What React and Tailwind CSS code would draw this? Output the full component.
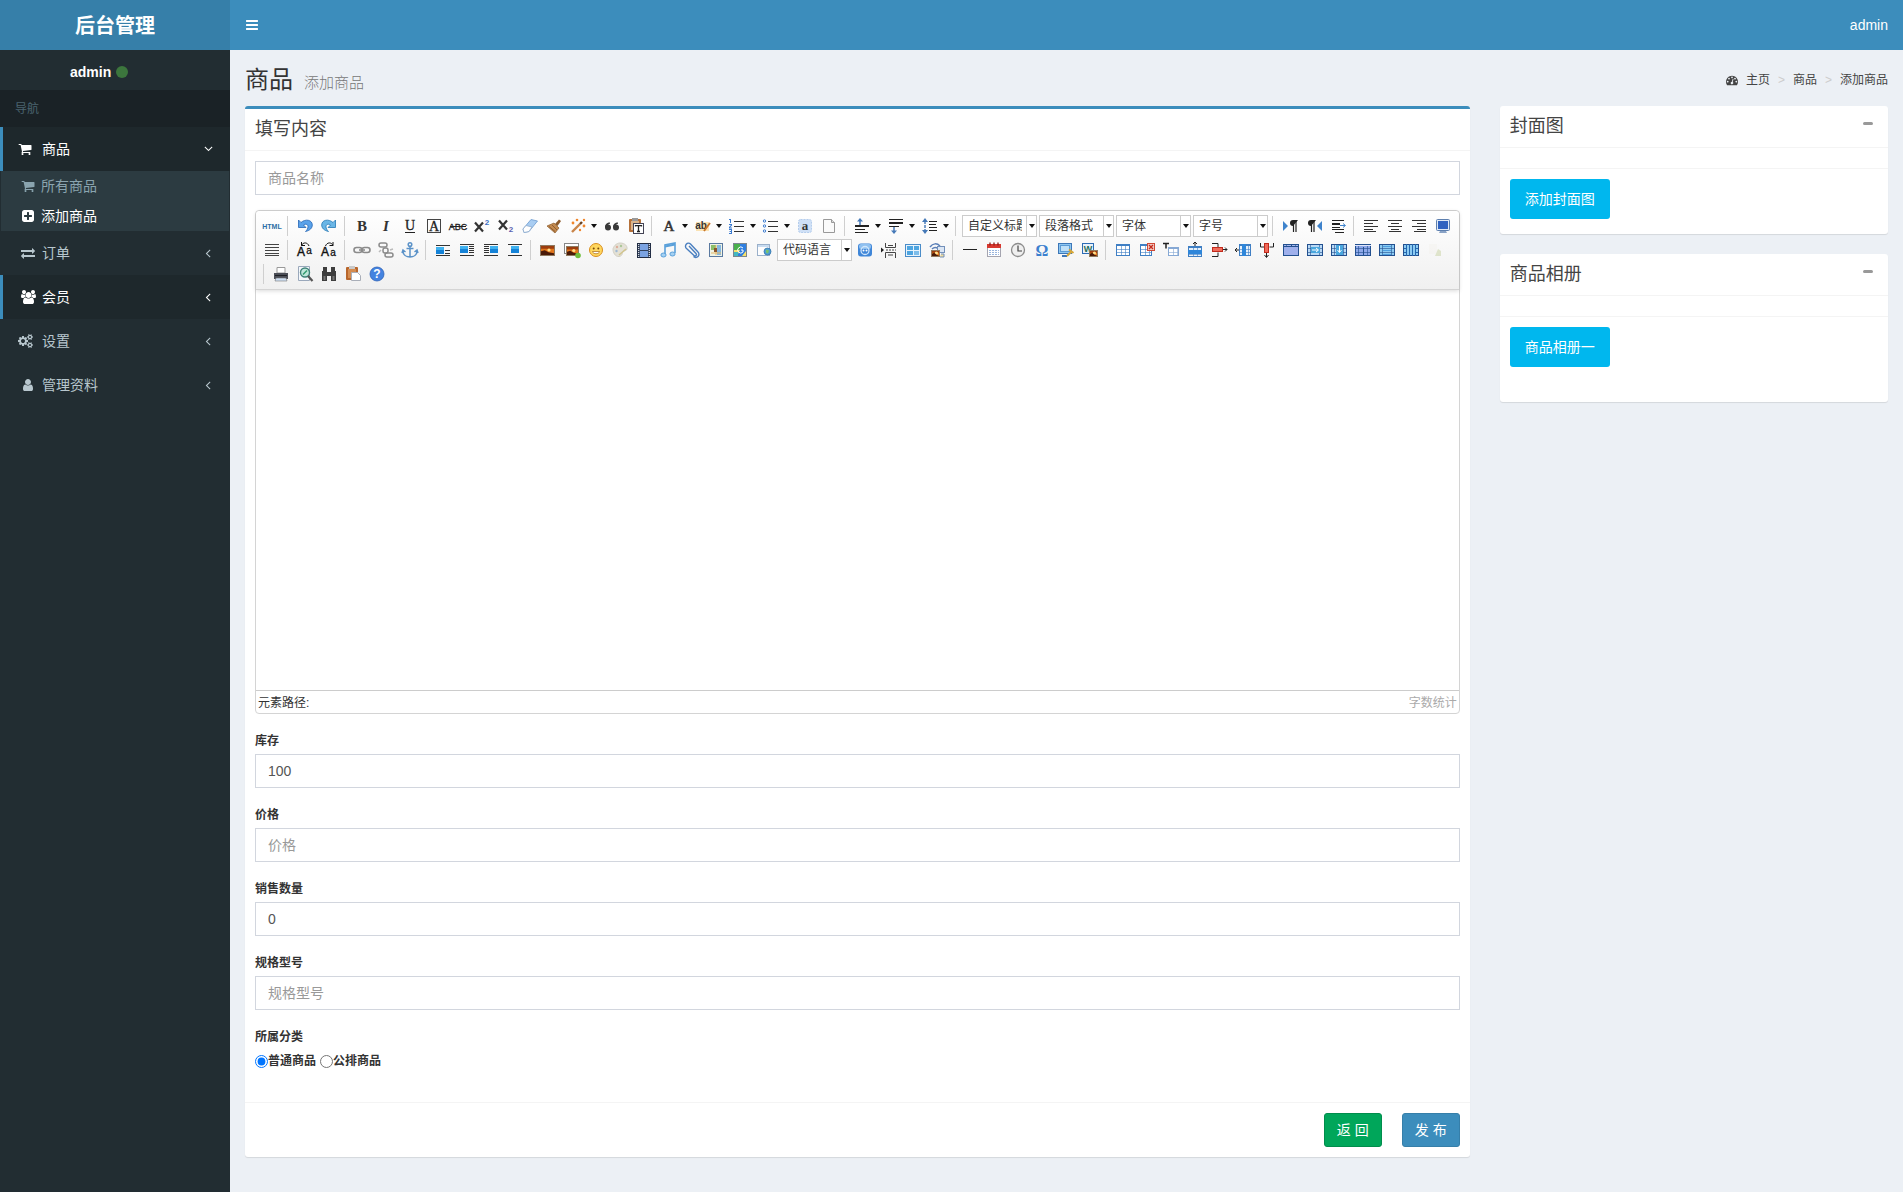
import React, { useState } from "react";

/* ---------- Site icons ---------- */

const GLYPHS = {
  bars: {
    w: 1792,
    d: "M1664 1344v128q0 26-19 45t-45 19h-1408q-26 0-45-19t-19-45v-128q0-26 19-45t45-19h1408q26 0 45 19t19 45zm0-512v128q0 26-19 45t-45 19h-1408q-26 0-45-19t-19-45v-128q0-26 19-45t45-19h1408q26 0 45 19t19 45zm0-512v128q0 26-19 45t-45 19h-1408q-26 0-45-19t-19-45v-128q0-26 19-45t45-19h1408q26 0 45 19t19 45z",
  },
  cart: {
    w: 1792,
    d: "M704 1536q0 52-38 90t-90 38-90-38-38-90 38-90 90-38 90 38 38 90zm896 0q0 52-38 90t-90 38-90-38-38-90 38-90 90-38 90 38 38 90zm128-1088v512q0 24-16.5 42.5t-40.5 21.5l-1044 122q13 60 13 70 0 16-24 64h920q26 0 45 19t19 45-19 45-45 19h-1024q-26 0-45-19t-19-45q0-11 8-31.5t16-36 21.5-40 15.5-29.5l-177-823h-204q-26 0-45-19t-19-45 19-45 45-19h256q16 0 28.5 6.5t19.5 15.5 13 24.5 8 26 5.5 29.5 4.5 26h1201q26 0 45 19t19 45z",
  },
  angle: {
    w: 1792,
    d: "M1203 544q0 13-10 23l-393 393 393 393q10 10 10 23t-10 23l-50 50q-10 10-23 10t-23-10l-466-466q-10-10-10-23t10-23l466-466q10-10 23-10t23 10l50 50q10 10 10 23z",
  },
  plusSquare: {
    w: 1792,
    d: "M1408 960v-128q0-26-19-45t-45-19h-320v-320q0-26-19-45t-45-19h-128q-26 0-45 19t-19 45v320h-320q-26 0-45 19t-19 45v128q0 26 19 45t45 19h320v320q0 26 19 45t45 19h128q26 0 45-19t19-45v-320h320q26 0 45-19t19-45zm256-544v960q0 119-84.5 203.5t-203.5 84.5h-960q-119 0-203.5-84.5t-84.5-203.5v-960q0-119 84.5-203.5t203.5-84.5h960q119 0 203.5 84.5t84.5 203.5z",
  },
  exchange: {
    w: 1792,
    d: "M1792 1184v192q0 13-9.5 22.5t-22.5 9.5h-1376v192q0 13-9.5 22.5t-22.5 9.5q-12 0-24-10l-319-320q-9-9-9-22 0-14 9-23l320-320q9-9 23-9 13 0 22.5 9.5t9.5 22.5v192h1376q13 0 22.5 9.5t9.5 22.5zm0-544q0 14-9 23l-320 320q-9 9-23 9-13 0-22.5-9.5t-9.5-22.5v-192h-1376q-13 0-22.5-9.5t-9.5-22.5v-192q0-13 9.5-22.5t22.5-9.5h1376v-192q0-14 9-23t23-9q12 0 24 10l319 319q9 9 9 23z",
  },
  users: {
    w: 1920,
    d: "M593 896q-162 5-265 128h-134q-82 0-138-40.5t-56-118.5q0-353 124-353 6 0 43.5 21t97.5 42.5 119 21.5q67 0 133-23-5 37-5 66 0 139 81 256zm1071 637q0 120-73 189.5t-194 69.5h-874q-121 0-194-69.5t-73-189.5q0-53 3.5-103.5t14-109 26.5-108.5 43-97.5 62-81 85.5-53.5 111.5-20q10 0 43 21.5t73 48 107 48 135 21.5 135-21.5 107-48 73-48 43-21.5q61 0 111.5 20t85.5 53.5 62 81 43 97.5 26.5 108.5 14 109 3.5 103.5zm-1024-1277q0 106-75 181t-181 75-181-75-75-181 75-181 181-75 181 75 75 181zm704 384q0 159-112.5 271.5t-271.5 112.5-271.5-112.5-112.5-271.5 112.5-271.5 271.5-112.5 271.5 112.5 112.5 271.5zm576 225q0 78-56 118.5t-138 40.5h-134q-103-123-265-128 81-117 81-256 0-29-5-66 66 23 133 23 59 0 119-21.5t97.5-42.5 43.5-21q124 0 124 353zm-128-609q0 106-75 181t-181 75-181-75-75-181 75-181 181-75 181 75 75 181z",
  },
  user: {
    w: 1792,
    d: "M1536 1399q0 109-62.5 187t-150.5 78h-854q-88 0-150.5-78t-62.5-187q0-85 8.5-160.5t31.5-152 58.5-131 94-89 134.5-34.5q131 128 313 128t313-128q76 0 134.5 34.5t94 89 58.5 131 31.5 152 8.5 160.5zm-256-887q0 159-112.5 271.5t-271.5 112.5-271.5-112.5-112.5-271.5 112.5-271.5 271.5-112.5 271.5 112.5 112.5 271.5z",
  },
  cogs: {
    w: 1920,
    d: "M896 896q0-106-75-181t-181-75-181 75-75 181 75 181 181 75 181-75 75-181zm768 512q0-52-38-90t-90-38-90 38-38 90q0 53 37.5 90.5t90.5 37.5 90.5-37.5 37.5-90.5zm0-1024q0-52-38-90t-90-38-90 38-38 90q0 53 37.5 90.5t90.5 37.5 90.5-37.5 37.5-90.5zm-384 421v185q0 10-7 19.5t-16 10.5l-155 24q-11 35-32 76 34 48 90 115 7 11 7 20 0 12-7 19-23 30-82.5 89.5t-78.5 59.5q-11 0-21-7l-115-90q-37 19-77 31-11 108-23 155-7 24-30 24h-186q-11 0-20-7.5t-10-17.5l-23-153q-34-10-75-31l-118 89q-7 7-20 7-11 0-21-8-144-133-144-160 0-9 7-19 10-14 41-53t47-61q-23-44-35-82l-152-24q-10-1-17-9.5t-7-19.5v-185q0-10 7-19.5t16-10.5l155-24q11-35 32-76-34-48-90-115-7-11-7-20 0-12 7-20 22-30 82-89t79-59q11 0 21 7l115 90q34-18 77-32 11-108 23-154 7-24 30-24h186q11 0 20 7.5t10 17.5l23 153q34 10 75 31l118-89q8-7 20-7 11 0 21 8 144 133 144 160 0 8-7 19-12 16-42 54t-45 60q23 48 34 82l152 23q10 2 17 10.5t7 19.5zm640 533v140q0 16-149 31-12 27-30 52 51 113 51 138 0 4-4 7-122 71-124 71-8 0-46-47t-52-68q-20 2-30 2t-30-2q-14 21-52 68t-46 47q-2 0-124-71-4-3-4-7 0-25 51-138-18-25-30-52-149-15-149-31v-140q0-16 149-31 13-29 30-52-51-113-51-138 0-4 4-7 4-2 35-20t59-34 30-16q8 0 46 46.5t52 67.5q20-2 30-2t30 2q51-71 92-112l6-2q4 0 124 70 4 3 4 7 0 25-51 138 17 23 30 52 149 15 149 31zm0-1024v140q0 16-149 31-12 27-30 52 51 113 51 138 0 4-4 7-122 71-124 71-8 0-46-47t-52-68q-20 2-30 2t-30-2q-14 21-52 68t-46 47q-2 0-124-71-4-3-4-7 0-25 51-138-18-25-30-52-149-15-149-31v-140q0-16 149-31 13-29 30-52-51-113-51-138 0-4 4-7 4-2 35-20t59-34 30-16q8 0 46 46.5t52 67.5q20-2 30-2t30 2q51-71 92-112l6-2q4 0 124 70 4 3 4 7 0 25-51 138 17 23 30 52 149 15 149 31z",
  },
  dashboard: {
    w: 1792,
    d: "M384 1152q0-53-37.5-90.5t-90.5-37.5-90.5 37.5-37.5 90.5 37.5 90.5 90.5 37.5 90.5-37.5 37.5-90.5zm192-448q0-53-37.5-90.5t-90.5-37.5-90.5 37.5-37.5 90.5 37.5 90.5 90.5 37.5 90.5-37.5 37.5-90.5zm428 481l101-382q6-26-7.5-48.5t-38.5-29.5-48 6.5-30 39.5l-101 382q-60 5-107 43.5t-63 98.5q-20 77 20 146t117 89 146-20 89-117q16-60-6-117t-72-91zm660-33q0-53-37.5-90.5t-90.5-37.5-90.5 37.5-37.5 90.5 37.5 90.5 90.5 37.5 90.5-37.5 37.5-90.5zm-640-640q0-53-37.5-90.5t-90.5-37.5-90.5 37.5-37.5 90.5 37.5 90.5 90.5 37.5 90.5-37.5 37.5-90.5zm448 192q0-53-37.5-90.5t-90.5-37.5-90.5 37.5-37.5 90.5 37.5 90.5 90.5 37.5 90.5-37.5 37.5-90.5zm320 448q0 261-141 483-19 29-54 29h-1402q-35 0-54-29-141-221-141-483 0-182 71-348t191-286 286-191 348-71 348 71 286 191 191 286 71 348z",
  },
};

function Glyph({ name, className = "h-[14px] w-[14px]" }) {
  const g = GLYPHS[name];
  return (
    <svg viewBox={`0 0 ${g.w} 1792`} className={className} fill="currentColor" aria-hidden="true">
      <path d={g.d} />
    </svg>
  );
}

/* ---------- Editor toolbar icons, drawn on an 18 x 18 board ---------- */

const SERIF = '"Liberation Serif", serif';
const SANS = '"Liberation Sans", sans-serif';

const Lines = ({ rows, color = "#333" }) =>
  rows.map(([x, y, w], i) => <rect key={i} x={x} y={y} width={w} height="1" fill={color} />);

const Grid = ({ x = 2, y = 3, w = 14, h = 12, fill = "#fff", line = "#3f7fc4", head = "#3f7fc4" }) => (
  <g>
    <rect x={x + 0.5} y={y + 0.5} width={w - 1} height={h - 1} fill={fill} stroke={line} />
    <rect x={x} y={y} width={w} height="2" fill={head} />
    <path
      d={`M${x + 5.5} ${y}v${h}M${x + 9.5} ${y}v${h}M${x} ${y + 5.5}h${w}M${x} ${y + 8.5}h${w}`}
      stroke={line}
      strokeOpacity="0.6"
      fill="none"
    />
  </g>
);

const Cells = ({ children, fill = "#b9d9f5" }) => (
  <g>
    <rect x="1.5" y="3.5" width="15" height="11" fill={fill} stroke="#23508f" />
    <path d="M4.5 3v12M13.5 3v12M1 7.5h16M1 11.5h16" stroke="#23508f" strokeOpacity="0.6" fill="none" />
    {children}
  </g>
);

const Photo = ({ x, y, w, h }) => (
  <g>
    <rect x={x + 0.5} y={y + 0.5} width={w - 1} height={h - 1} fill="#e2761b" stroke="#8f7a60" />
    <rect x={x + 1} y={y + 1} width={w - 2} height={h / 4} fill="#9c3d0e" />
    <circle cx={x + w * 0.6} cy={y + h / 2 - 0.5} r="1.6" fill="#ffe08a" />
    <path
      d={`M${x + 1} ${y + h - 1}v-${h / 3}l${w / 4}-1 ${w / 4} 2 ${w / 2 - 2} 1v${h / 3 - 2}z`}
      fill="#4a1a08"
    />
  </g>
);

const Chain = () => (
  <g fill="none" stroke="#8b8b8b" strokeWidth="1.6">
    <rect x="1" y="6.5" width="8" height="5" rx="2.5" />
    <rect x="9" y="6.5" width="8" height="5" rx="2.5" />
    <path d="M6 9h6" />
  </g>
);

const Float = ({ bx, by, rows }) => (
  <g>
    <Lines rows={rows} />
    <rect x={bx} y={by} width="8" height="7" fill="#1583d8" />
    <rect x={bx} y={by} width="8" height="3" fill="#3fb1ef" />
  </g>
);

const Numbered = ({ marks }) => (
  <g>
    <Lines rows={[[6, 4, 10], [6, 9, 10], [6, 14, 10]]} />
    {marks}
  </g>
);

const ICONS = {
  html: (
    <text x="9" y="12" textAnchor="middle" fontSize="7" fontWeight="700" fill="#2c6ea5" fontFamily={SANS}>
      HTML
    </text>
  ),
  undo: (
    <path d="M2.500 3v7.500H10L7.500 8c2-1.500 4.500-.8 4.500 1.700 0 1.800-1 3.300-2.500 4.800 4.500-1 6.800-3.500 6.800-6.500C16.300 2.800 9.500 1.500 5 5.500z" fill="#5aa2ea" stroke="#2466b5" strokeWidth="0.8" />
  ),
  redo: (
    <path d="M15.500 3v7.500H8L10.500 8C8.500 6.500 6 7.200 6 9.700c0 1.800 1 3.300 2.500 4.800C4 13.500 1.700 11 1.700 8 1.700 2.800 8.500 1.500 13 5.500z" fill="#6ab6e6" stroke="#2579b5" strokeWidth="0.8" />
  ),
  bold: <text x="9" y="14" textAnchor="middle" fontSize="15" fontWeight="700" fill="#333" fontFamily={SERIF}>B</text>,
  italic: <text x="9" y="14" textAnchor="middle" fontSize="15" fontWeight="700" fontStyle="italic" fill="#333" fontFamily={SERIF}>I</text>,
  underline: (
    <g>
      <text x="9" y="13" textAnchor="middle" fontSize="14" fill="#222" stroke="#222" strokeWidth="0.3" fontFamily={SERIF}>U</text>
      <rect x="4" y="15" width="10" height="1" fill="#222" />
    </g>
  ),
  border: (
    <g>
      <rect x="2.500" y="2.500" width="13" height="13" fill="none" stroke="#444" />
      <text x="9" y="14" textAnchor="middle" fontSize="14" fill="#222" stroke="#222" strokeWidth="0.3" fontFamily={SERIF}>A</text>
    </g>
  ),
  strike: (
    <g>
      <text x="9" y="13" textAnchor="middle" fontSize="9" fill="#222" stroke="#222" strokeWidth="0.3" fontFamily={SANS}>ABC</text>
      <rect x="1" y="9" width="16" height="1" fill="#222" />
    </g>
  ),
  sup: (
    <g>
      <path d="M2 5.500l8 9M10 5.500l-8 9" stroke="#333" strokeWidth="2.200" />
      <text x="14" y="8" textAnchor="middle" fontSize="8" fontWeight="700" fill="#3b6fc4" fontFamily={SANS}>2</text>
    </g>
  ),
  sub: (
    <g>
      <path d="M2 3.500l8 9M10 3.500l-8 9" stroke="#333" strokeWidth="2.200" />
      <text x="14" y="15" textAnchor="middle" fontSize="8" fontWeight="700" fill="#5a5fb0" fontFamily={SANS}>2</text>
    </g>
  ),
  eraser: (
    <g>
      <path d="M2 12l8-9.500 6.500 1.500-8.500 10.500-5 1z" fill="#a9cdf2" stroke="#6c9bcf" strokeWidth="0.8" />
      <path d="M2 12l3-3.500 6 1.500-3 4.500-5 1z" fill="#fff" stroke="#8eabcc" strokeWidth="0.8" />
    </g>
  ),
  brush: (
    <g>
      <path d="M10 7l4-4.500 2 1.500-3.500 5z" fill="#8c5a2b" />
      <path d="M2 9l7-3 5 5-4 5z" fill="#c48a4e" stroke="#8a5a2a" strokeWidth="0.7" />
      <path d="M4 9.500l6 5M7 8l5 5" stroke="#80512a" strokeWidth="0.8" />
    </g>
  ),
  wand: (
    <g>
      <path d="M3 15l8-8" stroke="#c9854a" strokeWidth="2.400" />
      <path d="M11 7l2-2" stroke="#6a3f1c" strokeWidth="2.400" />
      <g fill="#f0862c">
        <circle cx="4" cy="6" r="1.400" /><circle cx="8" cy="3" r="1.300" /><circle cx="15" cy="9" r="1.400" /><circle cx="15" cy="3" r="1.200" /><circle cx="11" cy="13" r="1.200" />
      </g>
    </g>
  ),
  quote: (
    <g fill="#3a3a3a">
      <circle cx="5" cy="10.500" r="3" /><path d="M2 10.500C2 7 4 5.500 7 5.500v1.200C5.500 7 4.500 8 4.500 9.500z" />
      <circle cx="13" cy="10.500" r="3" /><path d="M10 10.500c0-3.500 2-5 5-5v1.200c-1.500.3-2.500 1.300-2.500 2.800z" />
    </g>
  ),
  pasteText: (
    <g>
      <rect x="2" y="2" width="12" height="13" rx="1" fill="#b5713a" />
      <rect x="4" y="4" width="8" height="9" fill="#d9b48c" />
      <rect x="5" y="1" width="6" height="3" fill="#999" />
      <rect x="6.500" y="6.500" width="10" height="10" fill="#fff" stroke="#445" />
      <path d="M8.500 9.500V8.700h6v.8M11.500 8.500v6M10 14.500h3" stroke="#222" strokeWidth="1.300" fill="none" />
    </g>
  ),
  fore: <text x="9" y="14" textAnchor="middle" fontSize="15" fill="#333" stroke="#333" strokeWidth="0.5" fontFamily={SERIF}>A</text>,
  back: (
    <g>
      <rect x="2" y="5" width="13" height="9" fill="#fbe3b4" />
      <text x="7" y="12" textAnchor="middle" fontSize="10" fontWeight="700" fill="#333" fontFamily={SANS}>ab</text>
      <path d="M10 14l6-8" stroke="#c9762b" strokeWidth="1.800" />
    </g>
  ),
  ol: (
    <Numbered
      marks={<g fill="#3b7bd0"><path d="M1 2h2v4H2V3H1zM1 7h3v1.500L2 10.500h2v1H1v-1.500l2-2H1zM1 12h3v5H1v-1h2v-1H1.500v-1H3v-1H1z" /></g>}
    />
  ),
  ul: (
    <Numbered
      marks={<g fill="none" stroke="#3b7bd0"><circle cx="2.500" cy="4" r="1.200" /><circle cx="2.500" cy="9" r="1.200" /><circle cx="2.500" cy="14" r="1.200" /></g>}
    />
  ),
  selectAll: (
    <g>
      <rect x="2.500" y="2.500" width="13" height="13" rx="2" fill="#cfe0f6" stroke="#b4cdec" strokeDasharray="2 1" />
      <text x="9" y="13" textAnchor="middle" fontSize="13" fontWeight="700" fill="#333" fontFamily={SERIF}>a</text>
    </g>
  ),
  page: (
    <g>
      <path d="M3.500 2.500h8l3 3v10h-11z" fill="#fafafa" stroke="#999" />
      <path d="M11.500 2.500v3h3" fill="#ddd" stroke="#999" />
    </g>
  ),
  spaceTop: (
    <g>
      <path d="M7 8V3" stroke="#4579b8" strokeWidth="1.500" /><path d="M4 4.500L7 1l3 3.500z" fill="#4579b8" />
      <g fill="#222"><rect x="2" y="8" width="14" height="2" /><rect x="2" y="12" width="10" height="1" /><rect x="2" y="15" width="13" height="1" /></g>
    </g>
  ),
  spaceBottom: (
    <g>
      <path d="M7 10v5" stroke="#4579b8" strokeWidth="1.500" /><path d="M4 13.500L7 17l3-3.500z" fill="#4579b8" />
      <g fill="#222"><rect x="2" y="2" width="14" height="1" /><rect x="2" y="5" width="14" height="2" /><rect x="2" y="9" width="10" height="1" /></g>
    </g>
  ),
  lineHeight: (
    <g>
      <path d="M4 4v10" stroke="#4579b8" strokeWidth="1.400" strokeDasharray="3 1" /><path d="M1 5l3-4 3 4zM1 13l3 4 3-4z" fill="#4579b8" />
      <g fill="#222"><rect x="8" y="4" width="8" height="1" /><rect x="8" y="7" width="7" height="1" /><rect x="8" y="10" width="8" height="1" /><rect x="8" y="13" width="8" height="1" /></g>
    </g>
  ),
  ltr: (
    <g>
      <path d="M2 4l5 5-5 5z" fill="#3f83cc" />
      <path d="M12.500 4v11M15 4v11" stroke="#222" strokeWidth="1.200" /><path d="M17 3h-5a3 3 0 000 6z" fill="#222" />
    </g>
  ),
  rtl: (
    <g>
      <path d="M17 4l-5 5 5 5z" fill="#3f83cc" />
      <path d="M6.500 4v11M9 4v11" stroke="#222" strokeWidth="1.200" /><path d="M11 3H6a3 3 0 000 6z" fill="#222" />
    </g>
  ),
  indent: (
    <g>
      <g fill="#222"><rect x="3" y="3" width="12" height="1" /><rect x="3" y="6" width="8" height="2" /><rect x="3" y="10" width="8" height="1" /><rect x="3" y="12" width="12" height="1" /><rect x="6" y="15" width="9" height="1" /></g>
      <path d="M11 8.500h5M14 6.500l2.500 2-2.500 2" stroke="#3f83cc" fill="none" />
    </g>
  ),
  alignLeft: <Lines rows={[[2, 3, 14], [2, 6, 9], [2, 9, 14], [2, 12, 9], [2, 14, 12]]} />,
  alignCenter: <Lines rows={[[2, 3, 14], [5, 6, 8], [2, 9, 14], [5, 12, 8], [3, 14, 12]]} />,
  alignRight: <Lines rows={[[2, 3, 14], [7, 6, 9], [2, 9, 14], [7, 12, 9], [4, 14, 12]]} />,
  full: (
    <g>
      <rect x="2.500" y="2.500" width="13" height="11" rx="1" fill="#dfe9f5" stroke="#5d7fae" />
      <rect x="4" y="4" width="10" height="8" fill="#2f62c0" /><path d="M5 16h8l-1-2H6z" fill="#8aa3c6" />
    </g>
  ),
  justify: <Lines rows={[[2, 3, 14], [2, 6, 14], [2, 9, 14], [2, 12, 14], [2, 14, 14]]} color="#444" />,
  upper: (
    <g>
      <text x="5" y="15" textAnchor="middle" fontSize="12" fill="#111" stroke="#111" strokeWidth="0.4" fontFamily={SANS}>A</text>
      <text x="13" y="13" textAnchor="middle" fontSize="10" fill="#111" stroke="#111" strokeWidth="0.3" fontFamily={SANS}>a</text>
      <path d="M5.500 4.500c1.500-3.500 6-3.500 7.500.5M5.500 1v3.500H9" fill="none" stroke="#111" />
    </g>
  ),
  lower: (
    <g>
      <text x="5" y="15" textAnchor="middle" fontSize="12" fill="#111" stroke="#111" strokeWidth="0.4" fontFamily={SANS}>A</text>
      <text x="13" y="15" textAnchor="middle" fontSize="10" fill="#111" stroke="#111" strokeWidth="0.3" fontFamily={SANS}>a</text>
      <path d="M5.500 5C7 1 11.500 1 13 4.500M13 1v3.500H9.500" fill="none" stroke="#111" />
    </g>
  ),
  link: <Chain />,
  unlink: (
    <g fill="none" stroke="#8b8b8b" strokeWidth="1.500">
      <rect x="2" y="2" width="8" height="4" rx="2" /><rect x="6" y="7" width="5" height="5" rx="2" /><rect x="8" y="12" width="8" height="4" rx="2" />
      <path d="M13 9l3-1M4 9l-2 2" stroke="#bbb" />
    </g>
  ),
  anchor: (
    <g fill="none" stroke="#5b92c8" strokeWidth="1.500">
      <circle cx="9" cy="3.500" r="1.800" /><path d="M9 5.500V16M5.500 7.500h7M2 10c0 4 3.500 6 7 6s7-2 7-6M1 12l1-3 2.500 2M17 12l-1-3-2.500 2" />
    </g>
  ),
  imgNone: <Float bx={2} by={6} rows={[[2, 4, 14], [11, 9, 5], [11, 12, 5], [2, 14, 14]]} />,
  imgLeft: <Float bx={2} by={5} rows={[[2, 3, 14], [11, 5, 5], [11, 7, 5], [11, 9, 5], [11, 11, 5], [2, 14, 14]]} />,
  imgRight: <Float bx={8} by={5} rows={[[2, 3, 14], [2, 5, 5], [2, 7, 5], [2, 9, 5], [2, 11, 5], [2, 14, 14]]} />,
  imgCenter: <Float bx={5} by={5} rows={[[2, 3, 14], [2, 14, 14]]} />,
  image: <Photo x={1} y={4} w={15} h={11} />,
  album: (
    <g>
      <rect x="1.500" y="2.500" width="14" height="10" fill="#fff" stroke="#888" />
      <Photo x={3} y={5} w={13} h={10} />
      <circle cx="15" cy="14.500" r="2.800" fill="#6fbe3c" />
    </g>
  ),
  smile: (
    <g>
      <circle cx="9" cy="9" r="6.500" fill="#ffd75e" stroke="#d98e1e" />
      <circle cx="6.700" cy="7.500" r="1" fill="#7a4a0a" /><circle cx="11.300" cy="7.500" r="1" fill="#7a4a0a" />
      <path d="M5.500 10.500h7c-.5 3-6.500 3-7 0z" fill="#fff" stroke="#a86914" strokeWidth="0.700" />
    </g>
  ),
  palette: (
    <g opacity="0.7">
      <path d="M9 2c5 0 7.500 3 7 6-.5 2-3 1.500-4 2.500S12 15 8 15.500 2 11 2 8.500 5 2 9 2z" fill="#dcd8c8" stroke="#c4c0b0" />
      <circle cx="6" cy="6" r="1.200" fill="#d48f72" /><circle cx="10" cy="5" r="1.200" fill="#8cb470" /><circle cx="5.500" cy="10" r="1.200" fill="#7aa0c8" />
      <path d="M8 14l7-6" stroke="#c3b060" strokeWidth="1.500" />
    </g>
  ),
  film: (
    <g>
      <rect x="2.500" y="2.500" width="13" height="14" fill="#33435f" stroke="#222d44" />
      <rect x="5" y="3" width="8" height="6" fill="#7ba3e2" /><rect x="5" y="10" width="8" height="6" fill="#7ba3e2" />
      <path d="M3.700 3v13M14.300 3v13" stroke="#fff" strokeDasharray="1 1" />
    </g>
  ),
  music: (
    <g>
      <path d="M6 14V4l10-2v10" fill="none" stroke="#5aa0da" strokeWidth="1.600" /><path d="M6 5.500l10-2" stroke="#5aa0da" strokeWidth="2" />
      <ellipse cx="4.500" cy="14" rx="2.600" ry="2" fill="#a5d1f2" stroke="#5aa0da" /><ellipse cx="13.500" cy="13" rx="2.600" ry="2" fill="#a5d1f2" stroke="#5aa0da" />
    </g>
  ),
  clip: (
    <path d="M6 5l7 7.500a1.300 1.300 0 01-2 2L3.500 7.500A2.800 2.800 0 017.500 3l7.500 8a3 3 0 01-4.500 4.500" fill="none" stroke="#4a7fc0" strokeWidth="1.400" />
  ),
  map: (
    <g>
      <rect x="2.500" y="2.500" width="13" height="13" fill="#eef3e6" stroke="#5a79a0" />
      <rect x="4" y="4" width="5" height="5" fill="#8cbf6a" /><rect x="10" y="4" width="4" height="10" fill="#86b8e0" /><path d="M4 12h10M9 4v10" stroke="#e5b868" />
      <path d="M7 7h3v4H7z" fill="#8a5630" />
    </g>
  ),
  gmap: (
    <g>
      <rect x="2.500" y="2.500" width="13" height="13" fill="#f7e16a" stroke="#7b8690" />
      <rect x="3" y="3" width="6" height="6" fill="#49b04b" /><path d="M9 3h6v7l-4 5H6l3-6z" fill="#2f7fe0" /><path d="M12 7a3 3 0 100 4h0V9h-2" fill="none" stroke="#fff" />
      <rect x="3" y="11" width="4" height="4" fill="#45b8c0" />
    </g>
  ),
  frame: (
    <g>
      <rect x="2.500" y="3.500" width="12" height="11" fill="#fdfdfe" stroke="#9ab0ca" /><path d="M3 4h11v2H3z" fill="#c8dbf0" />
      <circle cx="12.500" cy="10.500" r="3.500" fill="#4f9fd4" stroke="#2b6aa5" strokeWidth="0.700" /><path d="M11 8.500l3 1-1 3-2-1z" fill="#7cc36a" />
    </g>
  ),
  webapp: (
    <g>
      <rect x="2" y="2.500" width="14" height="13" rx="3" fill="#3f86d8" /><rect x="3" y="3" width="12" height="5" rx="2" fill="#8ec0f0" />
      <circle cx="9" cy="9.500" r="4" fill="none" stroke="#cfe5fb" strokeWidth="1.300" /><circle cx="7.500" cy="9.500" r="1" fill="#fff" /><circle cx="10.500" cy="9.500" r="1" fill="#fff" />
    </g>
  ),
  pageBreak: (
    <g>
      <path d="M5.500 2v4.500h10V2M5.500 17v-5.500h10V17M8 4.500h5M8 14h5" fill="none" stroke="#444" />
      <path d="M6 9h10" stroke="#444" strokeDasharray="2 1" /><path d="M1 6.500L4 9l-3 2.500z" fill="#222" />
    </g>
  ),
  template: (
    <g>
      <rect x="1.500" y="3.500" width="15" height="12" fill="#e8f3fc" stroke="#4a8cc8" />
      <rect x="3" y="5" width="6" height="4" fill="#4ea5e0" /><rect x="10" y="5" width="5" height="4" fill="#4ea5e0" /><rect x="3" y="10" width="6" height="4" fill="#4ea5e0" /><rect x="10" y="10" width="5" height="4" fill="#7dbdea" />
    </g>
  ),
  background: (
    <g>
      <path d="M2 6c3-4 7-4 10-1M4 8c2-2 4-2 6-.5" fill="none" stroke="#5a7fb8" strokeWidth="1.500" />
      <rect x="9.500" y="5.500" width="7" height="6" fill="#dbe6f4" stroke="#7390ba" /><Photo x={3} y={9} w={9} h={7} /><path d="M13 13h3v3h-4" stroke="#7390ba" fill="#f0dc9c" />
    </g>
  ),
  hr: <rect x="2" y="8" width="14" height="1" fill="#222" />,
  calendar: (
    <g>
      <rect x="2.500" y="3.500" width="13" height="12" fill="#fff" stroke="#a5a5b0" /><rect x="2" y="3" width="14" height="4" fill="#d8382f" />
      <path d="M5 1.500v3M9 1.500v3M13 1.500v3" stroke="#8d1d18" strokeWidth="1.300" /><path d="M4 9.500h10M4 11.500h10M4 13.500h10" stroke="#9ab6de" strokeDasharray="2 1" />
    </g>
  ),
  clock: (
    <g>
      <circle cx="9" cy="9" r="6.500" fill="#efefef" stroke="#8c8c8c" strokeWidth="1.300" />
      <path d="M9 4.500V10h4" fill="none" stroke="#444" strokeWidth="1.200" />
    </g>
  ),
  omega: <text x="9" y="15" textAnchor="middle" fontSize="16" fontWeight="700" fill="#3c80cf" fontFamily={SERIF}>Ω</text>,
  snap: (
    <g>
      <rect x="1.500" y="2.500" width="13" height="10" fill="#8ec6f0" stroke="#3d77b8" /><rect x="3.500" y="4.500" width="9" height="6" fill="#bfe0f8" stroke="#5c9cd6" />
      <path d="M5 15h5" stroke="#3d77b8" strokeWidth="2" /><path d="M10 15l5-5M12 8.500l4.500 3.500" stroke="#d6a637" strokeWidth="2" />
    </g>
  ),
  word: (
    <g>
      <rect x="1.500" y="2.500" width="11" height="10" fill="#e9f1fb" stroke="#2d6cb5" /><text x="7" y="11" textAnchor="middle" fontSize="9" fontWeight="700" fill="#1d6c58" fontFamily={SANS}>W</text>
      <Photo x={8} y={9} w={9} h={7} />
    </g>
  ),
  table: <Grid />,
  tableDelete: (
    <g><Grid w={12} /><rect x="9.500" y="2.500" width="7" height="7" fill="#f3c9c2" stroke="#cf4936" /><path d="M11 4l4 4M15 4l-4 4" stroke="#c42a1c" strokeWidth="1.300" /></g>
  ),
  tableTitle: (
    <g><path d="M1 2.500h6M4 2.500v5" stroke="#222" strokeWidth="1.500" /><Grid x={6} y={6} w={11} h={9} line="#86a8d4" head="#86a8d4" /></g>
  ),
  rowBefore: (
    <g><path d="M9 1v5M7 3l2-2 2 2" stroke="#222" fill="none" /><Grid y={5} h={11} fill="#e6f1fb" /><rect x="2" y="9" width="14" height="4" fill="#2e86da" /></g>
  ),
  rowDelete: (
    <g><path d="M2 2.500h6v4M2 15.500h6v-4" fill="none" stroke="#222" /><rect x="2.500" y="6.500" width="10" height="4" fill="#f06a5a" stroke="#c02a1c" /><path d="M13 8.500h4M15 6.500l2 2-2 2" stroke="#222" fill="none" /></g>
  ),
  colBefore: (
    <g><Grid x={5} w={12} y={3} h={12} fill="#e6f1fb" /><rect x="8" y="3" width="4" height="12" fill="#2e86da" /><path d="M5 9H1M3 7L1 9l2 2" stroke="#222" fill="none" /></g>
  ),
  colDelete: (
    <g><path d="M2.500 2v4h4M15.500 2v4h-4" fill="none" stroke="#222" /><rect x="6.500" y="2.500" width="4" height="9" fill="#f06a5a" stroke="#c02a1c" /><path d="M8.500 12v4M6.500 14l2 2.500 2-2.500" stroke="#222" fill="none" /></g>
  ),
  merge: (
    <g><Cells fill="#a7b8ee" /><rect x="2" y="6" width="14" height="8" fill="#9fb0ec" /><path d="M9.500 3v3M1 5.500h16" stroke="#23508f" /></g>
  ),
  mergeRight: <Cells><rect x="5" y="6" width="9" height="6" fill="#4aa7de" /><path d="M6 9h6M10 7l2.500 2-2.500 2" stroke="#fff" fill="none" /></Cells>,
  mergeDown: <Cells><rect x="6" y="4" width="7" height="10" fill="#4aa7de" /><path d="M9.500 5v6M7.500 9l2 2.500 2-2.500" stroke="#fff" fill="none" /></Cells>,
  splitCells: <Cells fill="#8fa9ea"><path d="M9.500 6v9" stroke="#23508f" /><path d="M1 4.500h16" stroke="#dfe6fa" /></Cells>,
  splitRows: <Cells fill="#8ccbf2"><path d="M5 5.500h8M5 9.500h8M5 13.500h8" stroke="#4d9fe0" /></Cells>,
  splitCols: (
    <g>
      <rect x="1.500" y="3.500" width="15" height="11" fill="#8ccbf2" stroke="#23508f" />
      <path d="M4.500 3v12M7.500 3v12M10.500 3v12M13.500 3v12" stroke="#2568b0" />
      <path d="M2 7.500h3M2 11.500h3M13 7.500h3M13 11.500h3" stroke="#2568b0" />
    </g>
  ),
  chart: (
    <g opacity="0.35"><rect x="3" y="3" width="8" height="10" fill="#f3f1ea" /><path d="M9 15h6v-5l-3-2z" fill="#b4c27c" /></g>
  ),
  print: (
    <g>
      <path d="M5 2.500h8V8H5z" fill="#fff" stroke="#999" /><rect x="2" y="8" width="14" height="6" fill="#4b4e57" /><rect x="3" y="10" width="12" height="1" fill="#1f2126" />
      <path d="M4 13h10l1 3H3z" fill="#cfe0f4" stroke="#777" strokeWidth="0.600" />
    </g>
  ),
  preview: (
    <g>
      <path d="M2.500 1.500h11v14h-11z" fill="#f4f7fb" stroke="#9aa8bb" /><circle cx="9" cy="7.500" r="4.500" fill="#bfe6da" stroke="#3e8278" strokeWidth="1.400" /><path d="M7 9.500l4-4" stroke="#2d9a6c" strokeWidth="1.500" />
      <path d="M12 11l4.500 5" stroke="#555" strokeWidth="2.200" />
    </g>
  ),
  search: (
    <g fill="#3d3d3d">
      <rect x="3" y="2" width="4" height="4" /><rect x="11" y="2" width="4" height="4" /><path d="M2 6h5v10H2zM11 6h5v10h-5z" /><rect x="7" y="7" width="4" height="4" />
      <path d="M3.500 11h2v4h-2zM12.500 11h2v4h-2z" fill="#777" />
    </g>
  ),
  paste: (
    <g><rect x="2" y="2" width="12" height="13" rx="1" fill="#b8662c" /><rect x="4" y="4" width="8" height="9" fill="#d58c50" /><rect x="5" y="1" width="6" height="3" fill="#c9c9c9" /><path d="M7.500 7.500h6l3 3v5h-9z" fill="#fff" stroke="#a9aeb8" /></g>
  ),
  help: (
    <g>
      <circle cx="9" cy="9" r="7" fill="#4483e0" stroke="#2f62b8" strokeWidth="0.800" />
      <text x="9" y="13" textAnchor="middle" fontSize="12" fontWeight="700" fill="#fff" fontFamily={SANS}>?</text>
    </g>
  ),
};

const Caret = () => (
  <svg viewBox="0 0 6 4" className="h-1 w-[6px]" aria-hidden="true">
    <path d="M0 0h6L3 4z" fill="#111" />
  </svg>
);

function Tool({ name, split }) {
  return (
    <button
      type="button"
      aria-label={name}
      className={
        split
          ? "flex h-6 w-[34px] shrink-0 items-center gap-1 pl-[3px]"
          : "flex h-6 w-6 shrink-0 items-center justify-center"
      }
    >
      <svg viewBox="0 0 18 18" className="h-[18px] w-[18px] shrink-0 overflow-visible" aria-hidden="true">
        {ICONS[name]}
      </svg>
      {split && <Caret />}
    </button>
  );
}

const Divider = () => (
  <span className="flex h-6 w-[9px] shrink-0 items-center pl-[3px]">
    <span className="h-5 w-px bg-[#cfcfcf]" />
  </span>
);

function Combo({ label }) {
  return (
    <span className="relative mx-px h-[22px] w-[75px] shrink-0">
      <select
        aria-label={label}
        className="h-full w-full appearance-none overflow-hidden border border-[#ccc] bg-white pr-[14px] pl-[5px] text-xs text-[#333] outline-none"
      >
        <option>{label}</option>
      </select>
      <span className="pointer-events-none absolute inset-y-px right-px flex w-[10px] items-center justify-center border-l border-[#ccc]">
        <Caret />
      </span>
    </span>
  );
}

/* "|" is a divider, "name+" a split button, "[label]" a drop-down */
const TOOLBAR = [
  "html | undo redo | bold italic underline border strike sup sub eraser brush wand+ quote pasteText | fore+ back+ ol+ ul+ selectAll page | spaceTop+ spaceBottom+ lineHeight+ | [自定义标题] [段落格式] [字体] [字号] | ltr rtl indent | alignLeft alignCenter alignRight full",
  "justify | upper lower | link unlink anchor | imgNone imgLeft imgRight imgCenter | image album smile palette film music clip map gmap frame [代码语言] webapp pageBreak template background | hr calendar clock omega snap word | table tableDelete tableTitle rowBefore rowDelete colBefore colDelete merge mergeRight mergeDown splitCells splitRows splitCols chart",
  "| print preview search paste help",
];

function ToolRow({ items }) {
  return (
    <div className="flex h-6 items-center">
      {items.split(" ").map((item, i) => {
        if (item === "|") return <Divider key={i} />;
        if (item[0] === "[") return <Combo key={i} label={item.slice(1, -1)} />;
        if (item.endsWith("+")) return <Tool key={i} name={item.slice(0, -1)} split />;
        return <Tool key={i} name={item} />;
      })}
    </div>
  );
}

function Editor() {
  return (
    <div className="mb-[15px] rounded border border-[#d4d4d4] bg-white">
      <div className="h-[79px] rounded-t border-b border-[#d4d4d4] bg-linear-to-b from-white to-[#f0f0f0] pt-[3px] pl-1 shadow-[0_1px_4px_rgba(0,0,0,0.15)]">
        {TOOLBAR.map((row, i) => (
          <ToolRow key={i} items={row} />
        ))}
      </div>
      <textarea aria-label="商品详情" className="block h-[400px] w-full resize-none outline-none" />
      <div className="flex h-[23px] items-center justify-between border-t border-[#ccc] px-[2px] pt-[2px] text-xs">
        <span className="text-[#333]">元素路径:</span>
        <span className="text-[#aaa]">字数统计</span>
      </div>
    </div>
  );
}

/* ---------- Page ---------- */

const inputClass =
  "block h-[34px] w-full border border-[#d2d6de] bg-white px-3 text-sm text-[#555] outline-none placeholder:text-[#999]";

function Field({ id, label, value, placeholder }) {
  return (
    <div className="mb-[15px]">
      <label htmlFor={id} className="mb-[3px] block pt-[2px] text-xs leading-5 font-bold text-[#333]">
        {label}
      </label>
      <input id={id} type="text" defaultValue={value} placeholder={placeholder} className={inputClass} />
    </div>
  );
}

function MenuItem({ icon, label, active, open, indent }) {
  return (
    <a
      href="#"
      className={
        active
          ? "flex h-11 items-center border-l-[3px] border-[#3c8dbc] bg-[#1e282c] pr-[15px] pl-[15px] text-white"
          : "flex h-11 items-center border-l-[3px] border-transparent pr-[15px] pl-[15px] text-[#b8c7ce]"
      }
    >
      <span className={indent ? "flex w-6 shrink-0 pl-[3px]" : "flex w-6 shrink-0"}>{icon}</span>
      <span className="grow">{label}</span>
      <Glyph name="angle" className={open ? "h-[14px] w-[14px] -rotate-90" : "h-[14px] w-[14px]"} />
    </a>
  );
}

function SideBox({ title, action, className }) {
  return (
    <section className={className}>
      <header className="flex h-[42px] items-center justify-between border-b border-[#f4f4f4] px-[10px] pb-[2px]">
        <h3 className="text-lg leading-5 text-[#444]">{title}</h3>
        <button type="button" aria-label="折叠" className="flex h-5 w-5 items-center justify-center pb-1">
          <span className="h-[3px] w-[10px] rounded-xs bg-[#999]" />
        </button>
      </header>
      <div className="h-[21px] border-b border-[#f4f4f4]" />
      <div className="p-[10px]">
        <button type="button" className="h-10 w-[100px] rounded-[3px] bg-[#00b7ee] text-sm whitespace-nowrap text-white">
          {action}
        </button>
      </div>
    </section>
  );
}

export default function App() {
  const [kind, setKind] = useState("normal");
  return (
    <div className='flex min-h-screen flex-col bg-[#ecf0f5] font-["Liberation_Sans","Noto_Sans_CJK_SC",sans-serif] text-sm text-[#333]'>
      <header className="flex h-[50px] text-white">
        <a href="#" className="flex w-[230px] items-center justify-center bg-[#367fa9] pt-[2px] text-xl font-bold">
          后台管理
        </a>
        <nav className="flex grow items-center justify-between bg-[#3c8dbc] px-[15px]">
          <button type="button" aria-label="切换导航">
            <Glyph name="bars" />
          </button>
          <a href="#">admin</a>
        </nav>
      </header>

      <div className="flex grow">
        <aside className="w-[230px] shrink-0 bg-[#222d32]">
          <div className="flex h-10 items-center gap-[5px] pt-1 pl-[70px] font-bold text-white">
            admin
            <span className="h-3 w-3 rounded-full bg-[#3c763d]" />
          </div>
          <div className="flex h-[37px] items-center bg-[#1a2226] pl-[15px] text-xs text-[#4b646f]">导航</div>
          <MenuItem icon={<Glyph name="cart" />} label="商品" active open />
          <div className="mx-px bg-[#2c3b41]">
            <a href="#" className="flex h-[30px] items-center gap-[6px] pl-5 text-[#8aa4af]">
              <Glyph name="cart" />
              所有商品
            </a>
            <a href="#" className="flex h-[30px] items-center gap-[6px] pl-5 text-white">
              <Glyph name="plusSquare" />
              添加商品
            </a>
          </div>
          <MenuItem icon={<Glyph name="exchange" />} label="订单" indent />
          <MenuItem icon={<Glyph name="users" className="h-[14px] w-[15px]" />} label="会员" active indent />
          <MenuItem icon={<Glyph name="cogs" className="h-[14px] w-[15px]" />} label="设置" />
          <MenuItem icon={<Glyph name="user" />} label="管理资料" indent />
        </aside>

        <main className="min-w-0 grow">
          <div className="flex h-14 items-center justify-between px-[15px] pt-[3px]">
            <h1 className="flex items-baseline gap-[11px] text-2xl text-[#333]">
              商品
              <small className="text-[15px] font-light text-[#777]">添加商品</small>
            </h1>
            <ol className="flex items-center text-xs text-[#444]">
              <li>
                <a href="#" className="flex items-center gap-2">
                  <Glyph name="dashboard" className="h-3 w-3" />
                  主页
                </a>
              </li>
              <li className="flex before:px-2 before:text-[#ccc] before:content-['>']">
                <a href="#">商品</a>
              </li>
              <li className="flex before:px-2 before:text-[#ccc] before:content-['>']">添加商品</li>
            </ol>
          </div>

          <div className="flex items-start">
            <div className="w-9/12 px-[15px]">
              <form
                onSubmit={(e) => e.preventDefault()}
                className="rounded-[3px] border-t-[3px] border-[#3c8dbc] bg-white shadow-[0_1px_1px_rgba(0,0,0,0.1)]"
              >
                <header className="flex h-[42px] items-center border-b border-[#f4f4f4] px-[10px] pb-[2px]">
                  <h3 className="text-lg leading-5 text-[#444]">填写内容</h3>
                </header>
                <div className="p-[10px]">
                  <input type="text" aria-label="商品名称" placeholder="商品名称" className={inputClass + " mb-[15px]"} />
                  <Editor />
                  <Field id="stock" label="库存" value="100" />
                  <Field id="price" label="价格" placeholder="价格" />
                  <Field id="sold" label="销售数量" value="0" />
                  <Field id="spec" label="规格型号" placeholder="规格型号" />
                  <fieldset className="pb-5 text-xs font-bold text-[#333]">
                    <legend className="mb-[3px] pt-[2px] leading-5">所属分类</legend>
                    <div className="flex h-[22px] items-center gap-1">
                      <label className="flex items-center">
                        <input
                          type="radio"
                          name="kind"
                          className="h-[13px] w-[13px]"
                          checked={kind === "normal"}
                          onChange={() => setKind("normal")}
                        />
                        普通商品
                      </label>
                      <label className="flex items-center">
                        <input
                          type="radio"
                          name="kind"
                          className="h-[13px] w-[13px]"
                          checked={kind === "public"}
                          onChange={() => setKind("public")}
                        />
                        公排商品
                      </label>
                    </div>
                  </fieldset>
                </div>
                <footer className="flex justify-end gap-5 border-t border-[#f4f4f4] p-[10px] text-white">
                  <button type="button" className="h-[34px] w-[58px] rounded-[3px] border border-[#008d4c] bg-[#00a65a]">
                    返 回
                  </button>
                  <button type="submit" className="h-[34px] w-[58px] rounded-[3px] border border-[#367fa9] bg-[#3c8dbc]">
                    发 布
                  </button>
                </footer>
              </form>
            </div>

            <div className="flex w-3/12 flex-col gap-5 px-[15px]">
              <SideBox
                title="封面图"
                action="添加封面图"
                className="rounded-[3px] bg-white pb-[5px] shadow-[0_1px_1px_rgba(0,0,0,0.1)]"
              />
              <SideBox
                title="商品相册"
                action="商品相册一"
                className="rounded-[3px] bg-white pb-[25px] shadow-[0_1px_1px_rgba(0,0,0,0.1)]"
              />
            </div>
          </div>
        </main>
      </div>
    </div>
  );
}
